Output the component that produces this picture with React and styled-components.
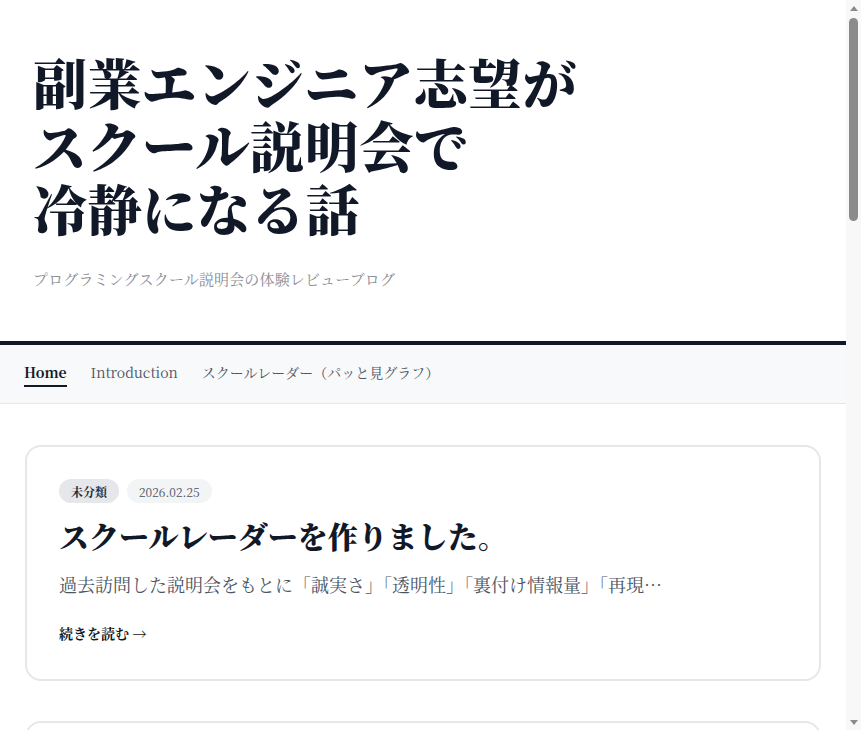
import styled, { createGlobalStyle } from "styled-components";

const GlobalStyle = createGlobalStyle`
  html, body {
    margin: 0;
    padding: 0;
    height: 100%;
    overflow: hidden;
    background: #ffffff;
  }
  body {
    font-family: "Noto Serif CJK JP", "Noto Sans CJK JP", "Liberation Serif", serif;
    color: #111827;
  }
  * { box-sizing: border-box; }
`;

const Shell = styled.div`
  display: flex;
  height: 100vh;
`;

const Viewport = styled.div`
  flex: 1;
  min-width: 0;
  overflow: hidden;
`;

// stand-in for the browser's scrollbar, which headless rendering hides
const ScrollTrack = styled.aside`
  width: 15px;
  flex-shrink: 0;
  display: flex;
  flex-direction: column;
  align-items: center;
  background: #f8f8f8;
`;

const ScrollButton = styled.div`
  height: 16px;
  width: 15px;
  display: flex;
  align-items: center;
  justify-content: center;
`;

const ScrollThumbArea = styled.div`
  flex: 1;
  width: 100%;
  display: flex;
  justify-content: center;
  padding-top: 2px;
`;

const ScrollThumb = styled.div`
  width: 9px;
  height: 203px;
  border-radius: 5px;
  background: #8b8b8b;
`;

const Page = styled.div`
  min-height: 2530px;
  display: flex;
  flex-direction: column;
`;

const Header = styled.header`
  padding: 50px 33px 52px;
  border-bottom: 4px solid #111827;
`;

const SiteTitle = styled.h1`
  margin: 0;
  font-size: 54px;
  line-height: 63px;
  font-weight: 900;
  letter-spacing: 0.01em;
  color: #111827;
`;

const Tagline = styled.p`
  margin: 29px 0 0;
  font-size: 15px;
  letter-spacing: 0.01em;
  color: #8a8d95;
`;

const Nav = styled.nav`
  display: flex;
  align-items: center;
  gap: 24px;
  padding: 0 24px;
  height: 59px;
  background: #f8f9fb;
  border-bottom: 1px solid #e5e7eb;
`;

const NavLink = styled.a`
  display: block;
  font-size: 14px;
  line-height: 20px;
  padding-bottom: 3px;
  text-decoration: none;
  color: ${(p) => (p.$active ? "#111827" : "#4b5563")};
  font-weight: ${(p) => (p.$active ? 700 : 400)};
  border-bottom: 2px solid ${(p) => (p.$active ? "#111827" : "transparent")};
`;

const Main = styled.main`
  padding: 41px 25px;
  display: flex;
  flex-direction: column;
  gap: 40px;
`;

const Card = styled.article`
  border: 2px solid #e5e7eb;
  border-radius: 16px;
  padding: 32px 32px 36px;
  background: #fff;
`;

const Meta = styled.div`
  display: flex;
  gap: 8px;
`;

const Tag = styled.span`
  display: inline-flex;
  align-items: center;
  height: 24px;
  padding: 0 12px;
  border-radius: 999px;
  font-size: 12px;
  font-weight: ${(p) => (p.$strong ? 700 : 400)};
  background: ${(p) => (p.$strong ? "#e5e7eb" : "#f3f4f6")};
  color: ${(p) => (p.$strong ? "#1f2937" : "#4b5563")};
`;

const CardTitle = styled.h2`
  margin: 12px 0 0;
  font-size: 30px;
  line-height: 40px;
  font-weight: 900;
  color: #111827;
`;

const Excerpt = styled.p`
  margin: 14px 0 0;
  font-size: 18px;
  line-height: 30px;
  color: #4b5563;
  white-space: nowrap;
  overflow: hidden;
  text-overflow: ellipsis;
`;

const ReadMore = styled.a`
  display: block;
  margin-top: 24px;
  font-size: 14px;
  line-height: 20px;
  font-weight: 700;
  color: #111827;
  text-decoration: none;
`;

const posts = [
  {
    cat: "未分類",
    date: "2026.02.25",
    title: "スクールレーダーを作りました。",
    excerpt:
      "過去訪問した説明会をもとに「誠実さ」「透明性」「裏付け情報量」「再現…",
  },
  {
    cat: "体験レビュー",
    date: "2026.02.18",
    title: "説明会で聞くべき質問リスト",
    excerpt: "営業トークに流されないために、事前に準備しておきたい質問をまとめました…",
  },
  {
    cat: "体験レビュー",
    date: "2026.02.10",
    title: "無料カウンセリングに行ってきた",
    excerpt: "副業で月5万円は本当に可能なのか、担当者の回答を記録しています…",
  },
  {
    cat: "未分類",
    date: "2026.02.01",
    title: "ブログを始めました。",
    excerpt: "副業エンジニアを目指す会社員が、スクール選びで考えたことを書いていきます…",
  },
];

function Arrow({ down }) {
  return (
    <svg width="8" height="5" viewBox="0 0 8 5">
      <path d={down ? "M0 0h8L4 5z" : "M4 0l4 5H0z"} fill="#8b8b8b" />
    </svg>
  );
}

export default function App() {
  return (
    <>
      <GlobalStyle />
      <Shell>
        <Viewport>
          <Page>
            <Header>
              <SiteTitle>
                副業エンジニア志望が
                <br />
                スクール説明会で
                <br />
                冷静になる話
              </SiteTitle>
              <Tagline>プログラミングスクール説明会の体験レビューブログ</Tagline>
            </Header>
            <Nav>
              <NavLink href="#" $active>Home</NavLink>
              <NavLink href="#">Introduction</NavLink>
              <NavLink href="#">スクールレーダー（パッと見グラフ）</NavLink>
            </Nav>
            <Main>
              {posts.map((post) => (
                <Card key={post.title}>
                  <Meta>
                    <Tag $strong>{post.cat}</Tag>
                    <Tag>{post.date}</Tag>
                  </Meta>
                  <CardTitle>{post.title}</CardTitle>
                  <Excerpt>{post.excerpt}</Excerpt>
                  <ReadMore href="#">続きを読む →</ReadMore>
                </Card>
              ))}
            </Main>
          </Page>
        </Viewport>
        <ScrollTrack aria-hidden="true">
          <ScrollButton><Arrow /></ScrollButton>
          <ScrollThumbArea><ScrollThumb /></ScrollThumbArea>
          <ScrollButton><Arrow down /></ScrollButton>
        </ScrollTrack>
      </Shell>
    </>
  );
}
